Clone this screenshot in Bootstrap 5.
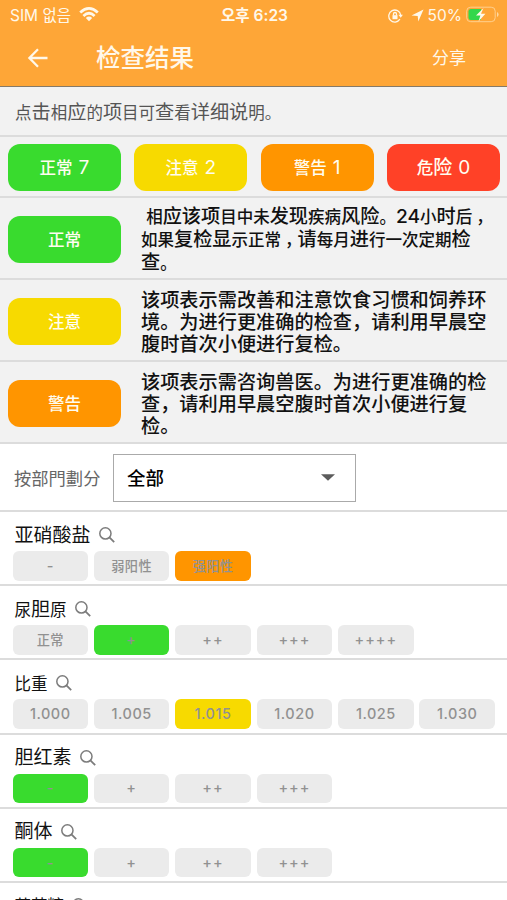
<!DOCTYPE html>
<html lang="zh-CN">
<head>
<meta charset="utf-8">
<meta name="viewport" content="width=device-width, initial-scale=1">
<title>检查结果</title>
<link href="https://cdn.jsdelivr.net/npm/bootstrap@5.3.0/dist/css/bootstrap.min.css" rel="stylesheet">
<style>
body{font-family:Inter,"Noto Sans CJK SC",sans-serif;font-size:19.2px;line-height:22px;color:#111;height:900px;overflow:hidden;background:#fff}
.top-area{background:#fea637;height:87px;border-bottom:1px solid #857a69;color:#fff8ea}
.status-line{height:30px;font-size:15.5px;font-family:Inter,"Noto Sans CJK KR",sans-serif;padding:1px 8px 0 10px;display:grid;grid-template-columns:1fr auto 1fr}
.title-line{height:55px;padding:1px 41px 0 27px}
.page-title{font-size:24.5px;font-weight:500;margin-left:47px;line-height:30px}
.share{font-size:17px}
.k{font-size:16.5px}
.comma{margin:0 -4px 0 4px}
.legend-bg{background:#f2f2f2}
.rule{border-bottom:2px solid #dcdcdc}
.intro{height:50px;padding:3px 0 0 15px;color:#555}
.stats{height:61px;padding:1px 7px 0 8px;display:grid;grid-template-columns:repeat(4,113px);justify-content:space-between;align-items:center}
.pill{width:113px;height:47px;border-radius:12px;color:#fffdf0;font-size:16.5px;font-weight:500;flex:none;padding-top:2px}
.pill b{font-weight:400;font-size:19px;margin-left:6px}
.g{background:#39db2e}.y{background:#f7da00}.o{background:#ff9500}.r{background:#ff4127}
.legend-item{height:82px;padding:2px 0 0 8px}
.legend-item p{margin:1px 0 0 20px;white-space:nowrap;font-weight:500}
.filter-line{height:68px;padding:1px 0 0 14px}
.filter-line label{font-size:17.3px;color:#666;width:99px;padding-top:2px}
.picker{width:243px;height:48px;border:1px solid #aaa;padding:0 20px 0 13px;font-size:18.5px;font-weight:500;color:#000}
.result{height:74.2px;padding:11px 12px 0 12.5px}
.result h2{font-size:19px;font-weight:400;line-height:24px;margin:0 0 4px 2px;height:24px;color:#111}
.result h2 > span{padding-top:1px}
.result svg{margin-left:8px}
.chips{display:grid;grid-template-columns:repeat(6,75.5px);gap:5.9px}
.chip{height:29.5px;border-radius:6px;background:#ebebeb;color:#919191;font-size:14.5px;letter-spacing:.5px;font-weight:500}
.chip.zh{font-size:13.2px;letter-spacing:.4px}
.chip.pl{letter-spacing:1px}
.chip.g{background:#39db2e}.chip.y{background:#f7da00}.chip.o{background:#ff9500}
</style>
<script src="https://cdn.jsdelivr.net/npm/bootstrap@5.3.0/dist/js/bootstrap.bundle.min.js"></script>
</head>
<body>
<svg width="0" height="0" class="d-none"><defs>
<symbol id="lens" viewBox="0 0 16 16"><circle cx="6.4" cy="6.4" r="5.6" fill="none" stroke="#7c7c7c" stroke-width="1.5"/><path d="M10.4 10.4L15.2 15.2" stroke="#7c7c7c" stroke-width="1.8"/></symbol>
</defs></svg>
<header class="top-area">
  <div class="status-line align-items-center">
    <div class="d-flex align-items-center"><span>SIM 없음</span>
      <svg class="ms-2" style="margin-top:-2px" width="20" height="15" viewBox="0 0 20 15" fill="none" stroke="#fff8ea" stroke-width="2.7"><path d="M1.2 5.5Q10-2.6 18.8 5.5M4.4 8.9Q10 3.6 15.6 8.9"/><path d="M10 14.2L6.8 11Q10 8.2 13.2 11Z" fill="#fff8ea" stroke="none"/></svg>
    </div>
    <div class="fw-semibold">오후 6:23</div>
    <div class="d-flex align-items-center justify-content-end">
      <svg width="15" height="14" viewBox="0 0 15 14" fill="none" stroke="#fff8ea" stroke-width="1.3"><path d="M11.9 10.2A6 6 0 1 1 12.7 6"/><path d="M10.4 5.8h4.5l-2.2 3z" fill="#fff8ea" stroke="none"/><rect x="4.5" y="6.2" width="5" height="4" fill="#fff8ea" stroke="none"/><path d="M5.5 6.5V5a1.5 1.5 0 0 1 3 0v1.5"/></svg>
      <svg class="ms-2 me-1" width="13" height="13" viewBox="0 0 12 13"><path d="M12 .5L6.8 12.5 6.2 7 0 6.4z" fill="#fff8ea"/></svg>
      <span>50%</span>
      <svg class="ms-1" style="margin-top:-3px" width="33" height="17" viewBox="0 0 33 17"><rect x=".7" y="1.2" width="28.5" height="14.5" rx="4" fill="none" stroke="#ffd08e" stroke-width="1"/><path d="M5 3h10v11H5a2.5 2.5 0 0 1-2.5-2.5v-6A2.5 2.5 0 0 1 5 3z" fill="#32d74b"/><path d="M17.5 2L10 9.6h4.4L12.5 15.5 19.4 7.7H15z" fill="#fff8ea"/><path d="M31 6v5q1.6-.6 1.6-2.5T31 6z" fill="#ffd79f"/></svg>
    </div>
  </div>
  <div class="title-line d-flex align-items-center">
    <svg width="22" height="20" viewBox="0 0 22 20" fill="none" stroke="#fff8ea" stroke-width="2.3"><path d="M20.5 10H3M11 1.3L2.4 10 11 18.7"/></svg>
    <div class="page-title">检查结果</div>
    <div class="share ms-auto">分享</div>
  </div>
</header>
<section class="legend-bg">
  <div class="intro rule d-flex align-items-center"><div><span class="k">点</span>击<span class="k">相</span>应<span class="k">的</span>项<span class="k">目可</span>查<span class="k">看</span>详细说<span class="k">明。</span></div></div>
  <div class="stats rule">
    <div class="pill g d-flex align-items-center justify-content-center">正常<b>7</b></div>
    <div class="pill y d-flex align-items-center justify-content-center">注意<b>2</b></div>
    <div class="pill o d-flex align-items-center justify-content-center">警告<b>1</b></div>
    <div class="pill r d-flex align-items-center justify-content-center"><span>危<span style="font-size:19px">险</span></span><b>0</b></div>
  </div>
  <div class="legend-item rule d-flex align-items-center">
    <div class="pill g d-flex align-items-center justify-content-center">正常</div>
    <p>&nbsp;<span class="k">相</span>应该项<span class="k">目中未</span>发现<span class="k">疾病</span>风险<span class="k">。</span>24<span class="k">小</span>时<span class="k">后<span class="comma">，</span></span><br><span class="k">如果</span>复检显<span class="k">示正常<span class="comma">，</span></span>请<span class="k">每月</span>进<span class="k">行一次定期</span>检<br>查<span class="k">。</span></p>
  </div>
  <div class="legend-item rule d-flex align-items-center">
    <div class="pill y d-flex align-items-center justify-content-center">注意</div>
    <p>该项表示需改善和注意饮食习惯和饲养环<br>境。为进行更准确的检查，请利用早晨空<br>腹时首次小便进行复检。</p>
  </div>
  <div class="legend-item rule d-flex align-items-center">
    <div class="pill o d-flex align-items-center justify-content-center">警告</div>
    <p>该项表示需咨询兽医。为进行更准确的检<br>查，请利用早晨空腹时首次小便进行复<br>检。</p>
  </div>
</section>
<section class="filter-line rule d-flex align-items-center">
  <label>按部門劃分</label>
  <div class="picker d-flex align-items-center justify-content-between"><span>全部</span><svg width="14" height="7" viewBox="0 0 14 7"><path d="M0 .3h14L7 6.8z" fill="#5c5c5c"/></svg></div>
</section>
<main>
  <section class="result rule">
    <h2 class="d-flex align-items-center"><span>亚硝酸盐</span><svg width="16" height="16"><use href="#lens"/></svg></h2>
    <div class="chips"><div class="chip d-flex align-items-center justify-content-center">-</div><div class="chip zh d-flex align-items-center justify-content-center">弱阳性</div><div class="chip zh o d-flex align-items-center justify-content-center">强阳性</div></div>
  </section>
  <section class="result rule">
    <h2 class="d-flex align-items-center"><span><span class="k">尿</span>胆<span class="k">原</span></span><svg width="16" height="16"><use href="#lens"/></svg></h2>
    <div class="chips"><div class="chip zh d-flex align-items-center justify-content-center">正常</div><div class="chip pl g d-flex align-items-center justify-content-center">+</div><div class="chip pl d-flex align-items-center justify-content-center">++</div><div class="chip pl d-flex align-items-center justify-content-center">+++</div><div class="chip pl d-flex align-items-center justify-content-center">++++</div></div>
  </section>
  <section class="result rule">
    <h2 class="d-flex align-items-center"><span class="k">比重</span><svg width="16" height="16"><use href="#lens"/></svg></h2>
    <div class="chips"><div class="chip d-flex align-items-center justify-content-center">1.000</div><div class="chip d-flex align-items-center justify-content-center">1.005</div><div class="chip y d-flex align-items-center justify-content-center">1.015</div><div class="chip d-flex align-items-center justify-content-center">1.020</div><div class="chip d-flex align-items-center justify-content-center">1.025</div><div class="chip d-flex align-items-center justify-content-center">1.030</div></div>
  </section>
  <section class="result rule">
    <h2 class="d-flex align-items-center"><span>胆红素</span><svg width="16" height="16"><use href="#lens"/></svg></h2>
    <div class="chips"><div class="chip g d-flex align-items-center justify-content-center">-</div><div class="chip pl d-flex align-items-center justify-content-center">+</div><div class="chip pl d-flex align-items-center justify-content-center">++</div><div class="chip pl d-flex align-items-center justify-content-center">+++</div></div>
  </section>
  <section class="result rule">
    <h2 class="d-flex align-items-center"><span>酮体</span><svg width="16" height="16"><use href="#lens"/></svg></h2>
    <div class="chips"><div class="chip g d-flex align-items-center justify-content-center">-</div><div class="chip pl d-flex align-items-center justify-content-center">+</div><div class="chip pl d-flex align-items-center justify-content-center">++</div><div class="chip pl d-flex align-items-center justify-content-center">+++</div></div>
  </section>
  <section class="result">
    <h2 class="d-flex align-items-center"><span class="k">葡萄糖</span><svg width="16" height="16"><use href="#lens"/></svg></h2>
  </section>
</main>
</body>
</html>
